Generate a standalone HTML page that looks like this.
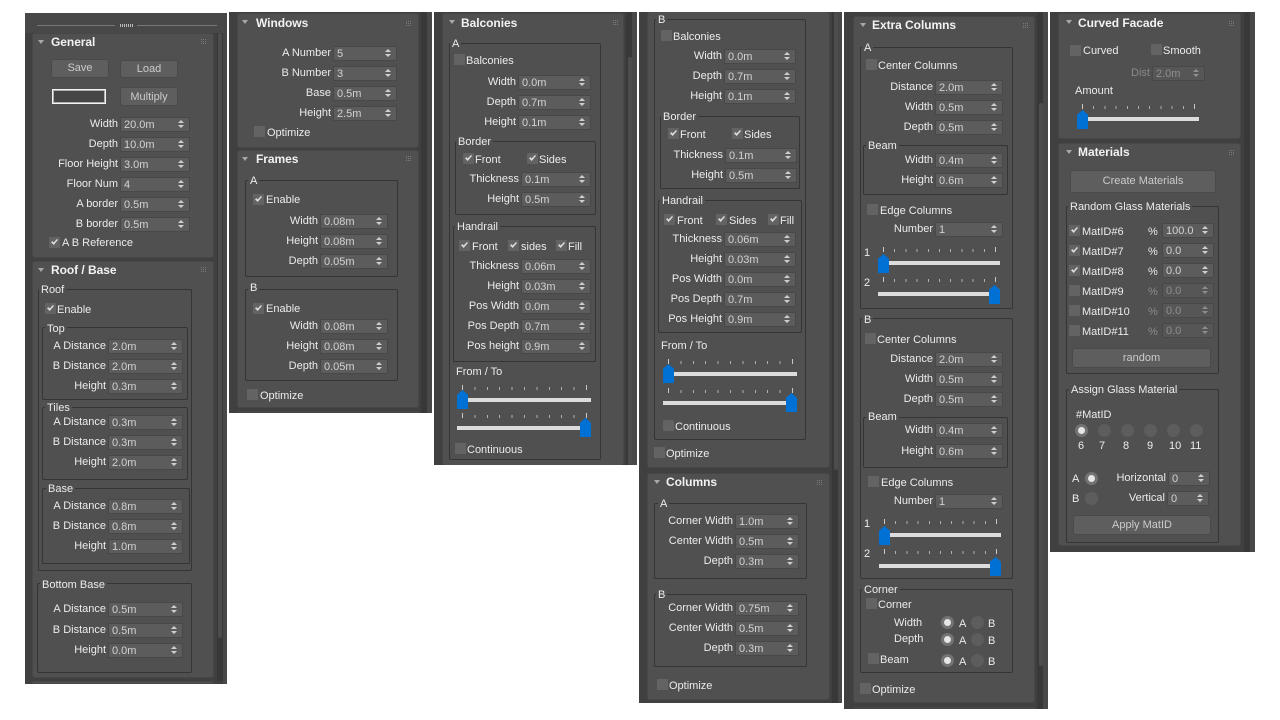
<!DOCTYPE html>
<html><head><meta charset="utf-8"><title>Rollouts</title>
<style>
html,body{margin:0;padding:0;background:#fff}
body{width:1280px;height:720px;position:relative;overflow:hidden;font:11px/14px "Liberation Sans",sans-serif;color:#ececec}
div,p{position:absolute;margin:0;box-sizing:border-box;white-space:nowrap}
p{margin-top:1px}
.c{background:#404040}
.st{background:#484848}
.tr{background:#383838}
.th{background:#4d4d4d;border-radius:2px}
.p{background:#505050;border:1px solid #474747;border-radius:3px}
.g{border:1px solid #353535;border-radius:2px}
.l{background:#505050;padding:0 2px;margin-left:-2px}
p.h{font-weight:bold;font-size:12px;color:#f2f2f2;margin-top:0;letter-spacing:-.05px}
.tri{width:0;height:0;border:3px solid transparent;border-top:4px solid #a8a8a8;border-bottom:0}
.d{width:7px;height:7px;background:repeating-linear-gradient(90deg,#505050 0 1px,transparent 1px 2px),repeating-linear-gradient(#505050 0 1px,#7c7c7c 1px 2px)}
.s{height:15px;background:#5c5c5c;border:1px solid #484848;line-height:14px;padding-left:3px;color:#d2d2d2}
.s:before,.s:after{content:"";position:absolute;right:5px;width:0;height:0;border-left:3px solid transparent;border-right:3px solid transparent}
.s:before{top:2px;border-bottom:3px solid #cfcfcf}
.s:after{top:7px;border-top:3px solid #cfcfcf}
.s u{position:absolute;right:100%;margin-right:3px;top:-1px;text-decoration:none;color:#ececec}
.n{color:#8e8e8e;background:#565656}
.n u{color:#8a8a8a}
.n:before{border-bottom-color:#8e8e8e}.n:after{border-top-color:#8e8e8e}
.k{width:11px;height:11px;background:#636363}
.y:after{content:"";position:absolute;left:2px;top:2px;width:7px;height:6px;background:#dcdcdc;clip-path:polygon(0 55%,22% 35%,38% 58%,85% 0,100% 14%,38% 100%)}
.o{width:13px;height:13px;border-radius:50%;background:#5d5d5d}
.f{background:#737373}
.f:after{content:"";position:absolute;left:3px;top:3px;width:7px;height:7px;border-radius:50%;background:#e6e6e6}
.b{background:#5e5e5e;border:1px solid #4a4a4a;border-radius:3px;text-align:center;color:#cbcbcb}
.tk,.ts{height:5px;background:linear-gradient(#c8c8c8,#c8c8c8) 0 0/1px 5px no-repeat,linear-gradient(#c8c8c8,#c8c8c8) 100% 0/1px 5px no-repeat}
.tk{background:linear-gradient(#c8c8c8,#c8c8c8) 0 0/1px 5px no-repeat,linear-gradient(#c8c8c8,#c8c8c8) 100% 0/1px 5px no-repeat,repeating-linear-gradient(90deg,#b0b0b0 0 1px,transparent 1px 12.4px) 0 2px/100% 3px no-repeat}
.ts{background:linear-gradient(#c8c8c8,#c8c8c8) 0 0/1px 5px no-repeat,linear-gradient(#c8c8c8,#c8c8c8) 100% 0/1px 5px no-repeat,repeating-linear-gradient(90deg,#b0b0b0 0 1px,transparent 1px 11.2px) 0 2px/100% 3px no-repeat}
.r{height:4px;background:#dcdcdc}
.m{width:11px;height:19px;background:#0071d4;clip-path:polygon(50% 0,100% 25%,100% 100%,0 100%,0 25%)}
.w{width:54px;height:15px;border:1px solid #f4f4f4;box-shadow:inset 0 0 0 1px #b0b0b0;background:#464646}
</style></head><body>

<!-- COLUMN 1 -->
<div class="c" style="left:25px;top:13px;width:202px;height:671px"></div>
<div class="st" style="left:25px;top:13px;width:202px;height:20px"></div>
<div class="st" style="left:223px;top:13px;width:4px;height:671px"></div>
<div class="tr" style="left:217px;top:33px;width:6px;height:648px"></div>
<div class="th" style="left:218px;top:33px;width:4px;height:605px"></div>
<div style="left:37px;top:25px;width:78px;height:1px;background:#777"></div>
<div style="left:137px;top:25px;width:80px;height:1px;background:#777"></div>
<div style="left:120px;top:24px;width:13px;height:3px;background:repeating-linear-gradient(90deg,#bbb 0 1px,transparent 1px 2px)"></div>
<div class="p" style="left:32px;top:33px;width:182px;height:225px"></div>
<div class="tri" style="left:38px;top:40px"></div><p class="h" style="left:51px;top:35px">General</p><div class="d" style="left:200px;top:38px"></div>
<div class="b" style="left:51px;top:59px;width:58px;height:19px;line-height:16px">Save</div>
<div class="b" style="left:120px;top:60px;width:58px;height:18px;line-height:17px">Load</div>
<div class="w" style="left:52px;top:89px"></div>
<div class="b" style="left:120px;top:87px;width:58px;height:19px;line-height:18px">Multiply</div>
<div class="s" style="left:120px;top:117px;width:70px"><u>Width</u>20.0m</div>
<div class="s" style="left:120px;top:137px;width:70px"><u>Depth</u>10.0m</div>
<div class="s" style="left:120px;top:157px;width:70px"><u>Floor Height</u>3.0m</div>
<div class="s" style="left:120px;top:177px;width:70px"><u>Floor Num</u>4</div>
<div class="s" style="left:120px;top:197px;width:70px"><u>A border</u>0.5m</div>
<div class="s" style="left:120px;top:217px;width:70px"><u>B border</u>0.5m</div>
<div class="k y" style="left:49px;top:237px"></div><p style="left:62px;top:235px">A B Reference</p>

<div class="p" style="left:32px;top:261px;width:182px;height:417px"></div>
<div class="tri" style="left:38px;top:268px"></div><p class="h" style="left:51px;top:263px">Roof / Base</p><div class="d" style="left:200px;top:266px"></div>
<div class="g" style="left:38px;top:289px;width:154px;height:282px"></div><p class="l" style="left:41px;top:282px">Roof</p>
<div class="k y" style="left:45px;top:303px"></div><p style="left:57px;top:302px">Enable</p>
<div class="g" style="left:42px;top:327px;width:146px;height:73px"></div><p class="l" style="left:47px;top:321px">Top</p>
<div class="s" style="left:108px;top:339px;width:75px"><u>A Distance</u>2.0m</div>
<div class="s" style="left:108px;top:359px;width:75px"><u>B Distance</u>2.0m</div>
<div class="s" style="left:108px;top:379px;width:75px"><u>Height</u>0.3m</div>
<div class="g" style="left:42px;top:407px;width:146px;height:73px"></div><p class="l" style="left:47px;top:400px">Tiles</p>
<div class="s" style="left:108px;top:415px;width:75px"><u>A Distance</u>0.3m</div>
<div class="s" style="left:108px;top:435px;width:75px"><u>B Distance</u>0.3m</div>
<div class="s" style="left:108px;top:455px;width:75px"><u>Height</u>2.0m</div>
<div class="g" style="left:42px;top:488px;width:148px;height:76px"></div><p class="l" style="left:48px;top:481px">Base</p>
<div class="s" style="left:108px;top:499px;width:75px"><u>A Distance</u>0.8m</div>
<div class="s" style="left:108px;top:519px;width:75px"><u>B Distance</u>0.8m</div>
<div class="s" style="left:108px;top:539px;width:75px"><u>Height</u>1.0m</div>
<div class="g" style="left:37px;top:583px;width:155px;height:90px"></div><p class="l" style="left:42px;top:577px">Bottom Base</p>
<div class="s" style="left:108px;top:602px;width:75px"><u>A Distance</u>0.5m</div>
<div class="s" style="left:108px;top:623px;width:75px"><u>B Distance</u>0.5m</div>
<div class="s" style="left:108px;top:643px;width:75px"><u>Height</u>0.0m</div>
<div class="p" style="left:32px;top:681px;width:182px;height:3px"></div>

<!-- COLUMN 2 -->
<div class="c" style="left:229px;top:12px;width:203px;height:401px"></div>
<div class="st" style="left:427px;top:12px;width:5px;height:401px"></div>
<div class="tr" style="left:421px;top:12px;width:6px;height:401px"></div>
<div class="p" style="left:237px;top:13px;width:182px;height:135px"></div>
<div class="tri" style="left:242px;top:20px"></div><p class="h" style="left:256px;top:16px">Windows</p><div class="d" style="left:405px;top:20px"></div>
<div class="s" style="left:333px;top:46px;width:64px"><u>A Number</u>5</div>
<div class="s" style="left:333px;top:66px;width:64px"><u>B Number</u>3</div>
<div class="s" style="left:333px;top:86px;width:64px"><u>Base</u>0.5m</div>
<div class="s" style="left:333px;top:106px;width:64px"><u>Height</u>2.5m</div>
<div class="k" style="left:254px;top:126px"></div><p style="left:267px;top:125px">Optimize</p>
<div class="p" style="left:237px;top:150px;width:182px;height:258px"></div>
<div class="tri" style="left:242px;top:157px"></div><p class="h" style="left:256px;top:152px">Frames</p><div class="d" style="left:405px;top:155px"></div>
<div class="g" style="left:245px;top:180px;width:153px;height:97px"></div><p class="l" style="left:250px;top:173px">A</p>
<div class="k y" style="left:253px;top:194px"></div><p style="left:266px;top:192px">Enable</p>
<div class="s" style="left:320px;top:214px;width:68px"><u>Width</u>0.08m</div>
<div class="s" style="left:320px;top:234px;width:68px"><u>Height</u>0.08m</div>
<div class="s" style="left:320px;top:254px;width:68px"><u>Depth</u>0.05m</div>
<div class="g" style="left:245px;top:289px;width:153px;height:92px"></div><p class="l" style="left:250px;top:280px">B</p>
<div class="k y" style="left:253px;top:303px"></div><p style="left:266px;top:301px">Enable</p>
<div class="s" style="left:320px;top:319px;width:68px"><u>Width</u>0.08m</div>
<div class="s" style="left:320px;top:339px;width:68px"><u>Height</u>0.08m</div>
<div class="s" style="left:320px;top:359px;width:68px"><u>Depth</u>0.05m</div>
<div class="k" style="left:247px;top:389px"></div><p style="left:260px;top:388px">Optimize</p>
<div class="p" style="left:237px;top:411px;width:182px;height:2px"></div>

<!-- COLUMN 3 -->
<div class="c" style="left:434px;top:12px;width:203px;height:453px"></div>
<div class="st" style="left:632px;top:12px;width:5px;height:453px"></div>
<div class="tr" style="left:626px;top:12px;width:6px;height:453px"></div>
<div class="th" style="left:628px;top:57px;width:4px;height:408px"></div>
<div class="p" style="left:442px;top:13px;width:182px;height:452px;border-bottom:0"></div>
<div class="tri" style="left:449px;top:20px"></div><p class="h" style="left:461px;top:16px">Balconies</p><div class="d" style="left:612px;top:19px"></div>
<div class="g" style="left:449px;top:43px;width:152px;height:417px"></div><p class="l" style="left:452px;top:36px">A</p>
<div class="k" style="left:454px;top:54px"></div><p style="left:466px;top:53px">Balconies</p>
<div class="s" style="left:518px;top:75px;width:73px"><u>Width</u>0.0m</div>
<div class="s" style="left:518px;top:95px;width:73px"><u>Depth</u>0.7m</div>
<div class="s" style="left:518px;top:115px;width:73px"><u>Height</u>0.1m</div>
<div class="g" style="left:455px;top:141px;width:141px;height:74px"></div><p class="l" style="left:458px;top:134px">Border</p>
<div class="k y" style="left:463px;top:153px"></div><p style="left:475px;top:152px">Front</p>
<div class="k y" style="left:527px;top:153px"></div><p style="left:539px;top:152px">Sides</p>
<div class="s" style="left:521px;top:172px;width:70px"><u>Thickness</u>0.1m</div>
<div class="s" style="left:521px;top:192px;width:70px"><u>Height</u>0.5m</div>
<div class="g" style="left:453px;top:226px;width:143px;height:136px"></div><p class="l" style="left:457px;top:219px">Handrail</p>
<div class="k y" style="left:459px;top:240px"></div><p style="left:472px;top:239px">Front</p>
<div class="k y" style="left:508px;top:240px"></div><p style="left:521px;top:239px">sides</p>
<div class="k y" style="left:556px;top:240px"></div><p style="left:568px;top:239px">Fill</p>
<div class="s" style="left:521px;top:259px;width:70px"><u>Thickness</u>0.06m</div>
<div class="s" style="left:521px;top:279px;width:70px"><u>Height</u>0.03m</div>
<div class="s" style="left:521px;top:299px;width:70px"><u>Pos Width</u>0.0m</div>
<div class="s" style="left:521px;top:319px;width:70px"><u>Pos Depth</u>0.7m</div>
<div class="s" style="left:521px;top:339px;width:70px"><u>Pos height</u>0.9m</div>
<p style="left:456px;top:364px">From / To</p>
<div class="tk" style="left:462px;top:385px;width:125px"></div>
<div class="r" style="left:457px;top:398px;width:134px"></div><div class="m" style="left:457px;top:390px"></div>
<div class="tk" style="left:462px;top:413px;width:125px"></div>
<div class="r" style="left:457px;top:426px;width:134px"></div><div class="m" style="left:580px;top:418px"></div>
<div class="k" style="left:455px;top:443px"></div><p style="left:467px;top:442px">Continuous</p>

<!-- COLUMN 4 -->
<div class="c" style="left:639px;top:12px;width:203px;height:691px"></div>
<div class="st" style="left:838px;top:12px;width:4px;height:691px"></div>
<div class="tr" style="left:832px;top:12px;width:6px;height:691px"></div>
<div class="th" style="left:834px;top:12px;width:4px;height:458px"></div>
<div class="p" style="left:647px;top:12px;width:183px;height:456px;border-top:0"></div>
<div class="g" style="left:654px;top:19px;width:152px;height:421px"></div><p class="l" style="left:658px;top:12px">B</p>
<div class="k" style="left:661px;top:30px"></div><p style="left:673px;top:29px">Balconies</p>
<div class="s" style="left:724px;top:49px;width:72px"><u>Width</u>0.0m</div>
<div class="s" style="left:724px;top:69px;width:72px"><u>Depth</u>0.7m</div>
<div class="s" style="left:724px;top:89px;width:72px"><u>Height</u>0.1m</div>
<div class="g" style="left:660px;top:116px;width:140px;height:73px"></div><p class="l" style="left:663px;top:109px">Border</p>
<div class="k y" style="left:668px;top:128px"></div><p style="left:680px;top:127px">Front</p>
<div class="k y" style="left:732px;top:128px"></div><p style="left:744px;top:127px">Sides</p>
<div class="s" style="left:725px;top:148px;width:72px"><u>Thickness</u>0.1m</div>
<div class="s" style="left:725px;top:168px;width:72px"><u>Height</u>0.5m</div>
<div class="g" style="left:658px;top:200px;width:144px;height:133px"></div><p class="l" style="left:662px;top:193px">Handrail</p>
<div class="k y" style="left:664px;top:214px"></div><p style="left:677px;top:213px">Front</p>
<div class="k y" style="left:716px;top:214px"></div><p style="left:729px;top:213px">Sides</p>
<div class="k y" style="left:768px;top:214px"></div><p style="left:780px;top:213px">Fill</p>
<div class="s" style="left:724px;top:232px;width:72px"><u>Thickness</u>0.06m</div>
<div class="s" style="left:724px;top:252px;width:72px"><u>Height</u>0.03m</div>
<div class="s" style="left:724px;top:272px;width:72px"><u>Pos Width</u>0.0m</div>
<div class="s" style="left:724px;top:292px;width:72px"><u>Pos Depth</u>0.7m</div>
<div class="s" style="left:724px;top:312px;width:72px"><u>Pos Height</u>0.9m</div>
<p style="left:661px;top:338px">From / To</p>
<div class="tk" style="left:668px;top:359px;width:125px"></div>
<div class="r" style="left:663px;top:372px;width:134px"></div><div class="m" style="left:663px;top:364px"></div>
<div class="tk" style="left:668px;top:388px;width:125px"></div>
<div class="r" style="left:663px;top:401px;width:134px"></div><div class="m" style="left:786px;top:393px"></div>
<div class="k" style="left:663px;top:420px"></div><p style="left:675px;top:419px">Continuous</p>
<div class="k" style="left:654px;top:447px"></div><p style="left:666px;top:446px">Optimize</p>
<div class="p" style="left:647px;top:473px;width:183px;height:227px"></div>
<div class="tri" style="left:654px;top:480px"></div><p class="h" style="left:666px;top:475px">Columns</p><div class="d" style="left:816px;top:479px"></div>
<div class="g" style="left:654px;top:503px;width:153px;height:76px"></div><p class="l" style="left:660px;top:496px">A</p>
<div class="s" style="left:735px;top:514px;width:64px"><u>Corner Width</u>1.0m</div>
<div class="s" style="left:735px;top:534px;width:64px"><u>Center Width</u>0.5m</div>
<div class="s" style="left:735px;top:554px;width:64px"><u>Depth</u>0.3m</div>
<div class="g" style="left:654px;top:594px;width:153px;height:73px"></div><p class="l" style="left:658px;top:587px">B</p>
<div class="s" style="left:735px;top:601px;width:64px"><u>Corner Width</u>0.75m</div>
<div class="s" style="left:735px;top:621px;width:64px"><u>Center Width</u>0.5m</div>
<div class="s" style="left:735px;top:641px;width:64px"><u>Depth</u>0.3m</div>
<div class="k" style="left:657px;top:679px"></div><p style="left:669px;top:678px">Optimize</p>

<!-- COLUMN 5 -->
<div class="c" style="left:844px;top:12px;width:204px;height:697px"></div>
<div class="st" style="left:1043px;top:12px;width:5px;height:697px"></div>
<div class="tr" style="left:1037px;top:12px;width:6px;height:697px"></div>
<div class="th" style="left:1039px;top:103px;width:4px;height:563px"></div>
<div class="p" style="left:853px;top:16px;width:182px;height:687px"></div>
<div class="tri" style="left:860px;top:23px"></div><p class="h" style="left:872px;top:18px">Extra Columns</p><div class="d" style="left:1022px;top:22px"></div>
<div class="g" style="left:860px;top:47px;width:153px;height:262px"></div><p class="l" style="left:864px;top:40px">A</p>
<div class="k" style="left:866px;top:59px"></div><p style="left:878px;top:58px">Center Columns</p>
<div class="s" style="left:935px;top:80px;width:68px"><u>Distance</u>2.0m</div>
<div class="s" style="left:935px;top:100px;width:68px"><u>Width</u>0.5m</div>
<div class="s" style="left:935px;top:120px;width:68px"><u>Depth</u>0.5m</div>
<div class="g" style="left:863px;top:145px;width:145px;height:50px"></div><p class="l" style="left:868px;top:138px">Beam</p>
<div class="s" style="left:935px;top:153px;width:68px"><u>Width</u>0.4m</div>
<div class="s" style="left:935px;top:173px;width:68px"><u>Height</u>0.6m</div>
<div class="k" style="left:867px;top:204px"></div><p style="left:880px;top:203px">Edge Columns</p>
<div class="s" style="left:935px;top:222px;width:68px"><u>Number</u>1</div>
<p style="left:864px;top:245px">1</p>
<div class="ts" style="left:883px;top:247px;width:113px"></div>
<div class="r" style="left:878px;top:261px;width:122px"></div><div class="m" style="left:878px;top:254px"></div>
<p style="left:864px;top:275px">2</p>
<div class="ts" style="left:883px;top:277px;width:113px"></div>
<div class="r" style="left:878px;top:292px;width:122px"></div><div class="m" style="left:989px;top:285px"></div>

<div class="g" style="left:860px;top:318px;width:153px;height:261px"></div><p class="l" style="left:864px;top:312px">B</p>
<div class="k" style="left:865px;top:333px"></div><p style="left:877px;top:332px">Center Columns</p>
<div class="s" style="left:935px;top:352px;width:68px"><u>Distance</u>2.0m</div>
<div class="s" style="left:935px;top:372px;width:68px"><u>Width</u>0.5m</div>
<div class="s" style="left:935px;top:392px;width:68px"><u>Depth</u>0.5m</div>
<div class="g" style="left:863px;top:417px;width:145px;height:51px"></div><p class="l" style="left:868px;top:409px">Beam</p>
<div class="s" style="left:935px;top:423px;width:68px"><u>Width</u>0.4m</div>
<div class="s" style="left:935px;top:444px;width:68px"><u>Height</u>0.6m</div>
<div class="k" style="left:868px;top:476px"></div><p style="left:881px;top:475px">Edge Columns</p>
<div class="s" style="left:935px;top:494px;width:68px"><u>Number</u>1</div>
<p style="left:864px;top:516px">1</p>
<div class="ts" style="left:884px;top:519px;width:113px"></div>
<div class="r" style="left:879px;top:533px;width:122px"></div><div class="m" style="left:879px;top:526px"></div>
<p style="left:864px;top:546px">2</p>
<div class="ts" style="left:884px;top:549px;width:113px"></div>
<div class="r" style="left:879px;top:564px;width:122px"></div><div class="m" style="left:990px;top:557px"></div>

<div class="g" style="left:860px;top:589px;width:153px;height:84px"></div><p class="l" style="left:864px;top:582px">Corner</p>
<div class="k" style="left:866px;top:598px"></div><p style="left:878px;top:597px">Corner</p>
<p style="left:894px;top:615px">Width</p><div class="o f" style="left:941px;top:616px"></div><p style="left:959px;top:616px">A</p><div class="o" style="left:971px;top:616px"></div><p style="left:988px;top:616px">B</p>
<p style="left:894px;top:631px">Depth</p><div class="o f" style="left:941px;top:633px"></div><p style="left:959px;top:633px">A</p><div class="o" style="left:971px;top:633px"></div><p style="left:988px;top:633px">B</p>
<div class="k" style="left:868px;top:653px"></div><p style="left:880px;top:652px">Beam</p><div class="o f" style="left:941px;top:654px"></div><p style="left:959px;top:654px">A</p><div class="o" style="left:971px;top:654px"></div><p style="left:988px;top:654px">B</p>
<div class="k" style="left:860px;top:683px"></div><p style="left:872px;top:682px">Optimize</p>
<div class="p" style="left:853px;top:707px;width:182px;height:2px"></div>

<!-- COLUMN 6 -->
<div class="c" style="left:1050px;top:12px;width:205px;height:540px"></div>
<div class="st" style="left:1250px;top:12px;width:5px;height:540px"></div>
<div class="tr" style="left:1244px;top:12px;width:6px;height:540px"></div>
<div class="p" style="left:1058px;top:13px;width:183px;height:126px"></div>
<div class="tri" style="left:1066px;top:20px"></div><p class="h" style="left:1078px;top:16px">Curved Facade</p><div class="d" style="left:1228px;top:20px"></div>
<div class="k" style="left:1070px;top:45px"></div><p style="left:1083px;top:43px">Curved</p>
<div class="k" style="left:1151px;top:44px"></div><p style="left:1163px;top:43px">Smooth</p>
<div class="s n" style="left:1152px;top:66px;width:53px"><u>Dist</u>2.0m</div>
<p style="left:1075px;top:83px">Amount</p>
<div class="ts" style="left:1082px;top:104px;width:113px"></div>
<div class="r" style="left:1077px;top:117px;width:122px"></div><div class="m" style="left:1077px;top:110px"></div>

<div class="p" style="left:1058px;top:143px;width:183px;height:403px"></div>
<div class="tri" style="left:1066px;top:150px"></div><p class="h" style="left:1078px;top:145px">Materials</p><div class="d" style="left:1228px;top:149px"></div>
<div class="b" style="left:1070px;top:170px;width:146px;height:23px;line-height:21px">Create Materials</div>
<div class="g" style="left:1066px;top:206px;width:153px;height:168px"></div><p class="l" style="left:1070px;top:199px">Random Glass Materials</p>
<div class="k y" style="left:1069px;top:225px"></div><p style="left:1082px;top:224px">MatID#6</p><p style="left:1148px;top:224px">%</p><div class="s" style="left:1162px;top:223px;width:52px">100.0</div>
<div class="k y" style="left:1069px;top:245px"></div><p style="left:1082px;top:244px">MatID#7</p><p style="left:1148px;top:244px">%</p><div class="s" style="left:1162px;top:243px;width:52px">0.0</div>
<div class="k y" style="left:1069px;top:265px"></div><p style="left:1082px;top:264px">MatID#8</p><p style="left:1148px;top:264px">%</p><div class="s" style="left:1162px;top:263px;width:52px">0.0</div>
<div class="k" style="left:1069px;top:285px"></div><p style="left:1082px;top:284px">MatID#9</p><p style="left:1148px;top:284px;color:#8a8a8a">%</p><div class="s n" style="left:1162px;top:283px;width:52px">0.0</div>
<div class="k" style="left:1069px;top:305px"></div><p style="left:1082px;top:304px">MatID#10</p><p style="left:1148px;top:304px;color:#8a8a8a">%</p><div class="s n" style="left:1162px;top:303px;width:52px">0.0</div>
<div class="k" style="left:1069px;top:325px"></div><p style="left:1082px;top:324px">MatID#11</p><p style="left:1148px;top:324px;color:#8a8a8a">%</p><div class="s n" style="left:1162px;top:323px;width:52px">0.0</div>
<div class="b" style="left:1072px;top:348px;width:139px;height:20px;line-height:18px">random</div>

<div class="g" style="left:1066px;top:389px;width:153px;height:154px"></div><p class="l" style="left:1071px;top:382px">Assign Glass Material</p>
<p style="left:1076px;top:407px">#MatID</p>
<div class="o f" style="left:1075px;top:424px"></div><div class="o" style="left:1098px;top:424px"></div><div class="o" style="left:1121px;top:424px"></div><div class="o" style="left:1144px;top:424px"></div><div class="o" style="left:1167px;top:424px"></div><div class="o" style="left:1190px;top:424px"></div>
<p style="left:1078px;top:438px">6</p><p style="left:1099px;top:438px">7</p><p style="left:1123px;top:438px">8</p><p style="left:1147px;top:438px">9</p><p style="left:1169px;top:438px">10</p><p style="left:1190px;top:438px">11</p>
<p style="left:1072px;top:471px">A</p><div class="o f" style="left:1085px;top:472px"></div>
<p style="left:1072px;top:491px">B</p><div class="o" style="left:1085px;top:492px"></div>
<div class="s" style="left:1168px;top:471px;width:42px"><u>Horizontal</u>0</div>
<div class="s" style="left:1167px;top:491px;width:42px"><u>Vertical</u>0</div>
<div class="b" style="left:1073px;top:515px;width:138px;height:20px;line-height:19px">Apply MatID</div>
</body></html>
